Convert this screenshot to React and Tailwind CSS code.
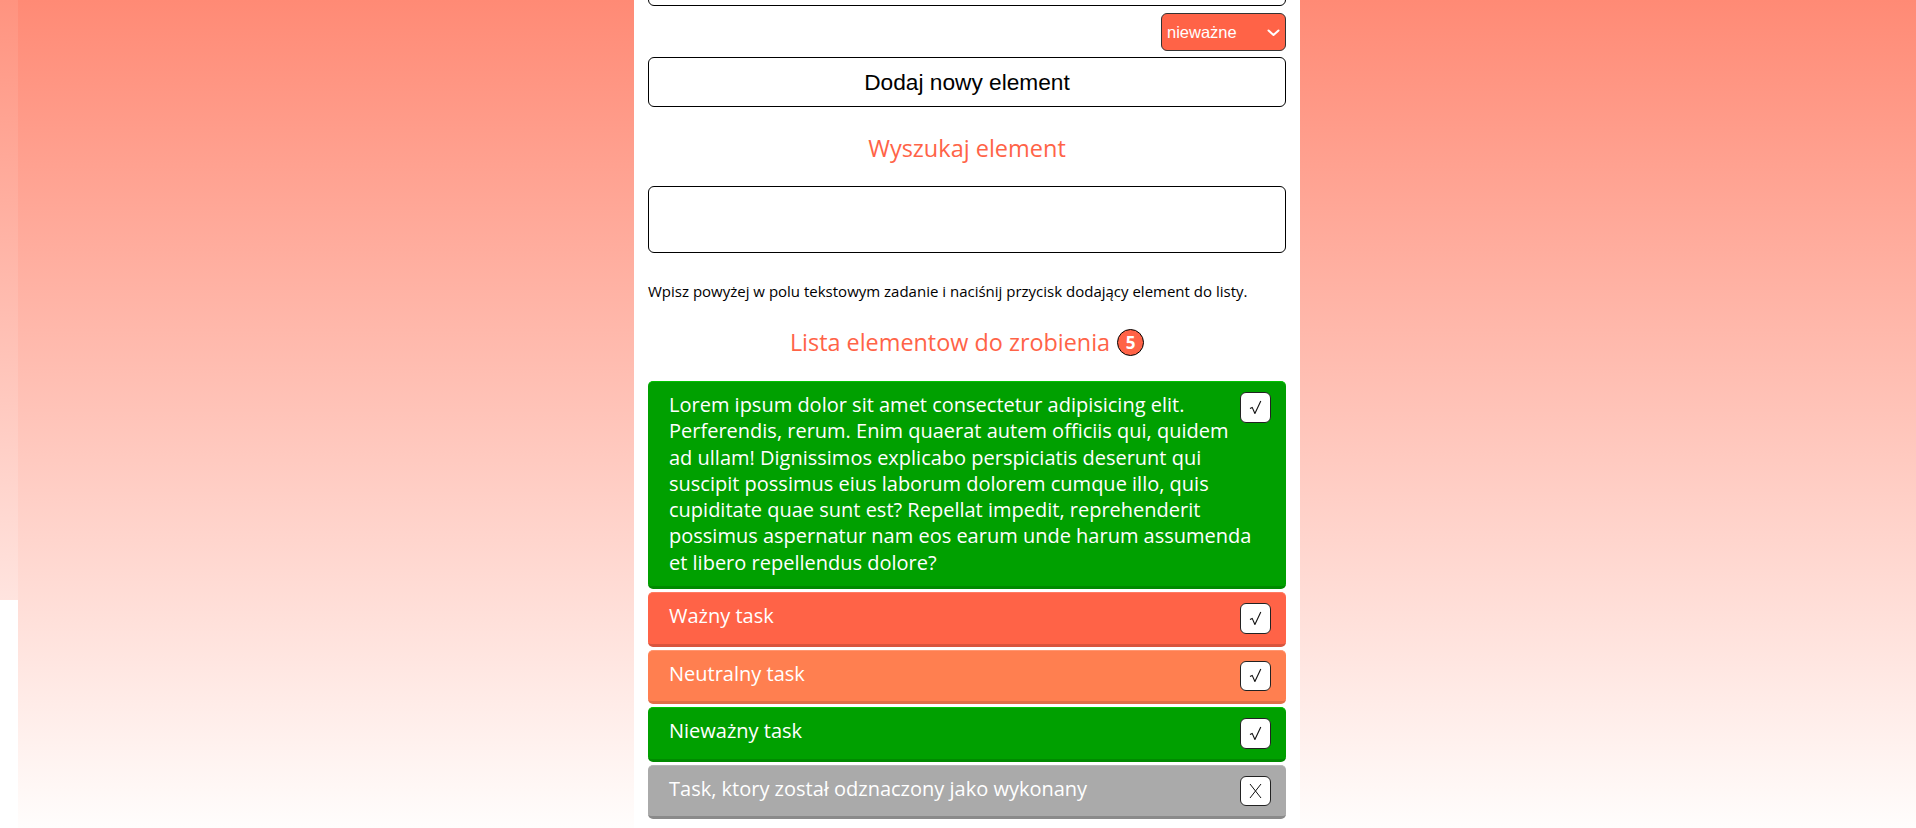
import { useState } from 'react';

const TASKS = [
  {
    id: 1,
    tone: 'green',
    text: 'Lorem ipsum dolor sit amet consectetur adipisicing elit. Perferendis, rerum. Enim quaerat autem officiis qui, quidem ad ullam! Dignissimos explicabo perspiciatis deserunt qui suscipit possimus eius laborum dolorem cumque illo, quis cupiditate quae sunt est? Repellat impedit, reprehenderit possimus aspernatur nam eos earum unde harum assumenda et libero repellendus dolore?',
    done: false,
  },
  { id: 2, tone: 'red', text: 'Ważny task', done: false },
  { id: 3, tone: 'orange', text: 'Neutralny task', done: false },
  { id: 4, tone: 'green', text: 'Nieważny task', done: false },
  { id: 5, tone: 'gray', text: 'Task, ktory został odznaczony jako wykonany', done: true },
];

const TONES = {
  green: 'bg-[#00a000] border-t-[#00c200] border-b-[#008a00]',
  red: 'bg-[#ff6347] border-t-[#ff7a62] border-b-[#d9543d]',
  orange: 'bg-[#ff7f50] border-t-[#ff9670] border-b-[#e06f46]',
  gray: 'bg-[#aaaaaa] border-t-[#b8b8b8] border-b-[#8a8a8a]',
};

export default function App() {
  const [tasks, setTasks] = useState(TASKS);
  const [priority, setPriority] = useState('niewazne');

  const toggle = (id) =>
    setTasks(list => list.map(t => (t.id === id ? { ...t, done: !t.done } : t)));

  return (
    <div className="flex h-[828px] overflow-hidden bg-[linear-gradient(to_bottom,#ff8a75,#fffdfc)] font-['Open_Sans',sans-serif]">
      {/* left strip */}
      <div className="w-[18px] shrink-0 flex flex-col">
        <div className="h-[600px] bg-[linear-gradient(to_bottom,#ff937f,#ffe4df)]" />
        <div className="flex-1 bg-white" />
      </div>

      <div className="flex-1 flex justify-center">
        <main className="w-[666px] bg-white px-[14px] flex flex-col">
          <input
            type="text"
            className="-mt-[44px] h-[50px] w-full shrink-0 rounded-[6px] border border-black bg-white outline-none"
          />

          <div className="relative mt-[7px] self-end">
            <select
              value={priority}
              onChange={e => setPriority(e.target.value)}
              className="h-[38px] w-[125px] appearance-none rounded-[6px] border border-[#333] bg-[#ff6347] pl-[5px] font-['Liberation_Sans',Arial,sans-serif] text-[16.5px] text-white outline-none"
            >
              <option value="wazne">ważne</option>
              <option value="neutralne">neutralne</option>
              <option value="niewazne">nieważne</option>
            </select>
            <svg
              className="pointer-events-none absolute right-[6px] top-[16px]"
              width="13"
              height="8"
              viewBox="0 0 13 8"
              fill="none"
            >
              <polyline points="1.5,1.5 6.5,6 11.5,1.5" stroke="white" strokeWidth="2" strokeLinecap="round" strokeLinejoin="round" />
            </svg>
          </div>

          <button className="mt-[6px] h-[50px] w-full shrink-0 rounded-[6px] border border-black bg-white font-['Liberation_Sans',Arial,sans-serif] text-[22.7px] text-black">
            Dodaj nowy element
          </button>

          <h2 className="mt-[25px] text-center text-[23.5px] leading-[32px] text-[#ff6347]">Wyszukaj element</h2>

          <input
            type="text"
            className="mt-[22px] h-[67px] w-full shrink-0 rounded-[6px] border border-black bg-white outline-none"
          />

          <p className="mt-[28px] text-[15px] leading-[20px] text-black">
            Wpisz powyżej w polu tekstowym zadanie i naciśnij przycisk dodający element do listy.
          </p>

          <h2 className="mt-[25px] flex items-center justify-center gap-[7px] text-[23.4px] leading-[32px] text-[#ff6347]">
            Lista elementow do zrobienia
            <span className="flex h-[27px] w-[27px] items-center justify-center rounded-full border border-black bg-[#ff6347] text-[17px] font-bold leading-none text-white">
              {tasks.length}
            </span>
          </h2>

          <ul className="mt-[23px] flex flex-col gap-[3px]">
            {tasks.map(task => (
              <li
                key={task.id}
                className={`flow-root rounded-[5px] border-t border-b-[3px] py-[10px] pl-[21px] pr-[15px] text-[20px] leading-[26.3px] text-white ${TONES[task.done ? 'gray' : task.tone]}`}
              >
                <button
                  onClick={() => toggle(task.id)}
                  className="float-right ml-[10px] flex h-[30.5px] w-[31px] items-center justify-center rounded-[6px] border border-[#222] bg-white"
                >
                  {task.done ? (
                    <svg width="13" height="16" viewBox="0 0 13 16" fill="none">
                      <path d="M1 1 L12 15 M12 1 L1 15" stroke="#111" strokeWidth="1" />
                    </svg>
                  ) : (
                    <svg width="13" height="15" viewBox="0 0 13 15" fill="none">
                      <path d="M1 8.5 L3.2 7.4 L5.9 13.5 L11.8 1" stroke="#111" strokeWidth="1.1" strokeLinejoin="round" />
                    </svg>
                  )}
                </button>
                {task.text}
              </li>
            ))}
          </ul>
        </main>
      </div>
    </div>
  );
}
